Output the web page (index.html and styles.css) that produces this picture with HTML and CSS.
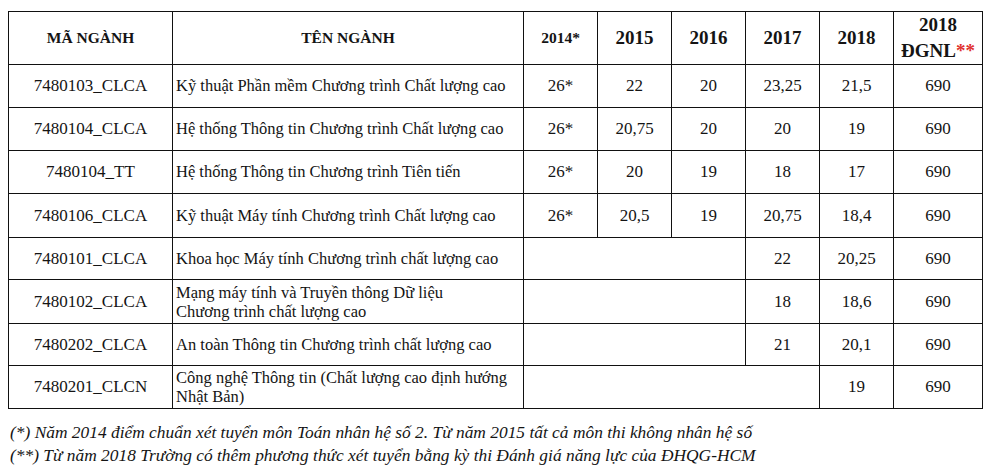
FILE: index.html
```html
<!DOCTYPE html>
<html lang="vi">
<head>
<meta charset="utf-8">
<title>Điểm chuẩn</title>
<link rel="stylesheet" href="styles.css">
</head>
<body>
<table class="scores">
  <colgroup>
    <col class="c-code"><col class="c-name"><col class="c-y"><col class="c-y"><col class="c-y"><col class="c-y"><col class="c-y"><col class="c-last">
  </colgroup>
  <thead>
    <tr class="head">
      <th class="h-small">MÃ NGÀNH</th>
      <th class="h-small">TÊN NGÀNH</th>
      <th class="h-small">2014*</th>
      <th>2015</th>
      <th>2016</th>
      <th>2017</th>
      <th>2018</th>
      <th class="h-two">2018<br>ĐGNL<span class="red">**</span></th>
    </tr>
  </thead>
  <tbody>
    <tr class="r1"><td>7480103_CLCA</td><td class="name">Kỹ thuật Phần mềm Chương trình Chất lượng cao</td><td>26*</td><td>22</td><td>20</td><td>23,25</td><td>21,5</td><td>690</td></tr>
    <tr class="r2"><td>7480104_CLCA</td><td class="name">Hệ thống Thông tin Chương trình Chất lượng cao</td><td>26*</td><td>20,75</td><td>20</td><td>20</td><td>19</td><td>690</td></tr>
    <tr class="r3"><td>7480104_TT</td><td class="name">Hệ thống Thông tin Chương trình Tiên tiến</td><td>26*</td><td>20</td><td>19</td><td>18</td><td>17</td><td>690</td></tr>
    <tr class="r4"><td>7480106_CLCA</td><td class="name">Kỹ thuật Máy tính Chương trình Chất lượng cao</td><td>26*</td><td>20,5</td><td>19</td><td>20,75</td><td>18,4</td><td>690</td></tr>
    <tr class="r5"><td>7480101_CLCA</td><td class="name">Khoa học Máy tính Chương trình chất lượng cao</td><td colspan="3"></td><td>22</td><td>20,25</td><td>690</td></tr>
    <tr class="r6"><td>7480102_CLCA</td><td class="name two">Mạng máy tính và Truyền thông Dữ liệu<br>Chương trình chất lượng cao</td><td colspan="3"></td><td>18</td><td>18,6</td><td>690</td></tr>
    <tr class="r7"><td>7480202_CLCA</td><td class="name">An toàn Thông tin Chương trình chất lượng cao</td><td colspan="3"></td><td>21</td><td>20,1</td><td>690</td></tr>
    <tr class="r8"><td>7480201_CLCN</td><td class="name two">Công nghệ Thông tin (Chất lượng cao định hướng<br>Nhật Bản)</td><td colspan="4"></td><td>19</td><td>690</td></tr>
  </tbody>
</table>
<div class="notes">
  <p>(*) Năm 2014 điểm chuẩn xét tuyển môn Toán nhân hệ số 2. Từ năm 2015 tất cả môn thi không nhân hệ số</p>
  <p>(**) Từ năm 2018 Trường có thêm phương thức xét tuyển bằng kỳ thi Đánh giá năng lực của ĐHQG-HCM</p>
</div>
</body>
</html>
```
FILE: styles.css
```css
html, body {
  margin: 0;
  padding: 0;
  background: #ffffff;
}
body {
  padding: 11px 0 0 8px;
  font-family: "Liberation Serif", "Times New Roman", serif;
  color: #141414;
}
.scores {
  border-collapse: collapse;
  table-layout: fixed;
  width: 975px;
}
.c-code { width: 164px; }
.c-name { width: 351px; }
.c-y { width: 74px; }
.c-last { width: 89px; }
.scores th,
.scores td {
  border: 1px solid #111111;
  padding: 0;
  text-align: center;
  vertical-align: middle;
  font-size: 17px;
  line-height: 20px;
}
.scores th {
  font-weight: bold;
  font-size: 19px;
}
.scores th.h-small {
  font-size: 15.5px;
}
.scores th.h-two {
  line-height: 26px;
}
.red { color: #e0312f; }
.head { height: 53px; }
.r1, .r2, .r3 { height: 43px; }
.r4 { height: 44px; }
.r5 { height: 42px; }
.r6 { height: 44px; }
.r7 { height: 42px; }
.r8 { height: 43px; }
.scores td.name {
  text-align: left;
  padding-left: 3px;
  font-size: 16.5px;
}
.scores td.two {
  line-height: 19px;
}
.notes {
  margin-top: 12px;
  margin-left: 2px;
  font-style: italic;
  font-size: 17.4px;
  line-height: 23px;
}
.notes p {
  margin: 0;
}
```
